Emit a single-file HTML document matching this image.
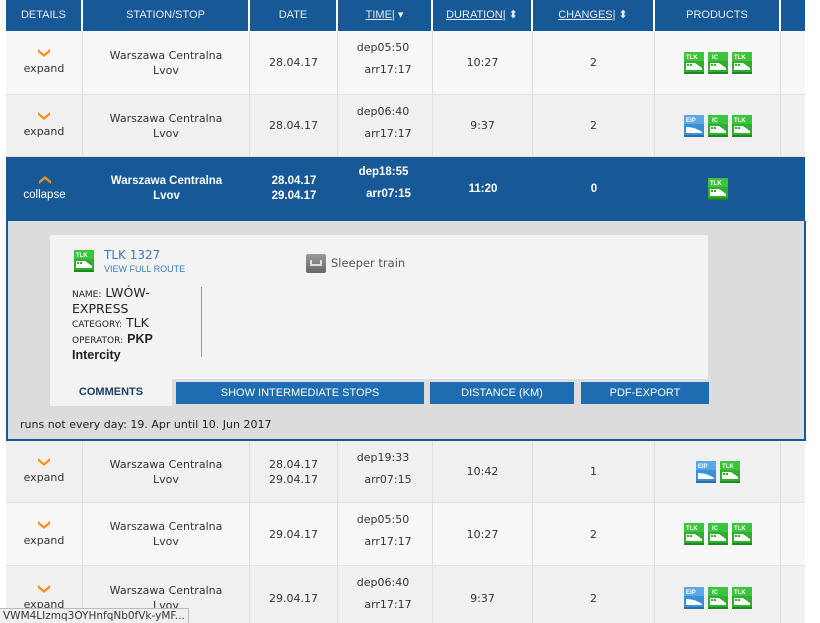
<!DOCTYPE html>
<html><head><meta charset="utf-8"><style>
*{margin:0;padding:0;box-sizing:border-box}
html,body{width:820px;height:623px;overflow:hidden}
body{background:#fff;font-family:"DejaVu Sans",Verdana,sans-serif;font-size:11px;color:#333;position:relative}
.row{position:absolute;left:6px;width:799px;display:flex;overflow:hidden}
.c{border-right:1px solid #ddd;display:flex;flex-direction:column;align-items:center;justify-content:center;text-align:center;line-height:15px}
.w1{width:77px}.w2{width:167px}.w3{width:88px}.w4{width:95px}.w5{width:100px}.w6{width:122px}.w7{width:126px}.w8{width:24px;border-right:none}
.hd{top:0;height:31px;background:#175896;color:#e8eef6;font-family:"Liberation Sans",sans-serif;font-size:11px}
.hd .c{border-right:2px solid #fff}
.hd .c.w8{border-right:none}
.u{text-decoration:underline}
.r{border-bottom:1px solid #e2e2e2}
.a{background:#f7f7f7}.b{background:#f0f0f0}
.chev{display:block;width:12px;height:8px}
.t{display:flex;flex-direction:column;line-height:22px;align-items:center;justify-content:flex-start;padding-top:6px}
.t .d{margin-left:-4px}.t .ar{margin-left:6px}
.ic{display:inline-block;width:20px;height:22px;margin:0 2px;vertical-align:middle}
.sel{top:157px;height:64px;background:#175896;color:#fff;font-family:"Liberation Sans",sans-serif;font-size:11.5px}
.sel .c{border-right:none}
.btn{position:absolute;top:382px;height:22px;background:#1e6db2;color:#fff;font-family:"Liberation Sans",sans-serif;font-size:11px;display:flex;align-items:center;justify-content:center}
</style></head><body>
<svg width="0" height="0" style="position:absolute"><defs>
<symbol id="g" viewBox="0 0 20 22"><rect width="20" height="20" fill="#2fae2f"/><rect y="0" width="20" height="9" fill="#3cc43c"/><text x="2" y="7" font-size="6" fill="#fff" font-family="Liberation Sans" font-weight="bold">TLK</text><path d="M2 11h9l7 5v2H2z" fill="#fff"/><path d="M3 12h2v2H3zM6 12h2v2H6z" fill="#2fae2f"/><rect y="20" width="20" height="2" fill="#1d8a1d"/></symbol>
<symbol id="i" viewBox="0 0 20 22"><rect width="20" height="20" fill="#2fae2f"/><rect y="0" width="20" height="9" fill="#3cc43c"/><text x="4" y="7" font-size="6" fill="#fff" font-family="Liberation Sans" font-weight="bold">IC</text><path d="M2 11h9l7 5v2H2z" fill="#fff"/><path d="M3 12h2v2H3zM6 12h2v2H6z" fill="#2fae2f"/><rect y="20" width="20" height="2" fill="#1d8a1d"/></symbol>
<symbol id="e" viewBox="0 0 20 22"><rect width="20" height="20" fill="#3b8fd6"/><rect width="20" height="9" fill="#5aa9e6"/><text x="2" y="7" font-size="6" fill="#fff" font-family="Liberation Sans" font-weight="bold">EIP</text><path d="M2 12c6 0 12 2 16 5v1H2z" fill="#fff"/><rect y="20" width="20" height="2" fill="#2a6faa"/></symbol>
<symbol id="dn" viewBox="0 0 12 8"><path d="M0 0l6 5 6-5v3l-6 5-6-5z" fill="#f39222"/></symbol>
<symbol id="up" viewBox="0 0 12 8"><path d="M0 8l6-5 6 5v-3l-6-5-6 5z" fill="#f39222"/></symbol>
</defs></svg>

<div class="row hd"><div class="c w1">DETAILS</div><div class="c w2">STATION/STOP</div><div class="c w3">DATE</div><div class="c w4"><span><span class="u">TIME|</span> ▾</span></div><div class="c w5"><span><span class="u">DURATION|</span> ⬍</span></div><div class="c w6"><span><span class="u">CHANGES|</span> ⬍</span></div><div class="c w7">PRODUCTS</div><div class="c w8"></div></div>

<div class="row r a" style="top:31px;height:64px"><div class="c w1"><svg class="chev"><use href="#dn"/></svg><div style="margin-top:4px">expand</div></div><div class="c w2">Warszawa Centralna<br>Lvov</div><div class="c w3">28.04.17</div><div class="c w4 t"><span class="d">dep05:50</span><span class="ar">arr17:17</span></div><div class="c w5">10:27</div><div class="c w6">2</div><div class="c w7"><div><svg class="ic"><use href="#g"/></svg><svg class="ic"><use href="#i"/></svg><svg class="ic"><use href="#g"/></svg></div></div><div class="c w8"></div></div>

<div class="row r b" style="top:95px;height:62px"><div class="c w1"><svg class="chev"><use href="#dn"/></svg><div style="margin-top:4px">expand</div></div><div class="c w2">Warszawa Centralna<br>Lvov</div><div class="c w3">28.04.17</div><div class="c w4 t"><span class="d">dep06:40</span><span class="ar">arr17:17</span></div><div class="c w5">9:37</div><div class="c w6">2</div><div class="c w7"><div><svg class="ic"><use href="#e"/></svg><svg class="ic"><use href="#i"/></svg><svg class="ic"><use href="#g"/></svg></div></div><div class="c w8"></div></div>

<div class="row sel"><div class="c w1"><svg class="chev"><use href="#up"/></svg><div style="margin-top:4px">collapse</div></div><div class="c w2" style="font-weight:bold">Warszawa Centralna<br>Lvov</div><div class="c w3" style="font-weight:bold">28.04.17<br>29.04.17</div><div class="c w4 t" style="font-weight:bold;padding-top:4px"><span class="d">dep18:55</span><span class="ar">arr07:15</span></div><div class="c w5" style="font-weight:bold">11:20</div><div class="c w6" style="font-weight:bold">0</div><div class="c w7"><svg class="ic"><use href="#g"/></svg></div><div class="c w8"></div></div>

<div style="position:absolute;left:6px;top:221px;width:800px;height:220px;background:#dcdcdc;border:2px solid #175896;border-top:none"></div>
<div style="position:absolute;left:50px;top:235px;width:658px;height:144px;background:#f3f3f3"></div>
<div style="position:absolute;left:50px;top:379px;width:122px;height:27px;background:#f3f3f3;color:#1d3f66;font-family:'Liberation Sans',sans-serif;font-weight:bold;font-size:11px;text-align:center;line-height:27px">COMMENTS</div>
<svg class="ic" style="position:absolute;left:72px;top:250px"><use href="#g"/></svg>
<div style="position:absolute;left:104px;top:248px;color:#3e79b5;font-size:12px">TLK 1327</div>
<div style="position:absolute;left:104px;top:264px;color:#3e79b5;font-family:'Liberation Sans',sans-serif;font-size:9px">VIEW FULL ROUTE</div>
<div style="position:absolute;left:306px;top:254px;width:20px;height:19px;background:linear-gradient(#9a9a9a,#666);border-radius:2px"></div>
<div style="position:absolute;left:310px;top:260px;width:12px;height:6px;border:2px solid #ddd;border-top:none"></div>
<div style="position:absolute;left:331px;top:256px;color:#555;font-size:11.5px">Sleeper train</div>
<div style="position:absolute;left:72px;top:286px;width:128px;font-size:12.5px;line-height:14px;color:#222"><span style="font-size:9px">NAME:</span> LWÓW-<br>EXPRESS<br><span style="font-size:9px">CATEGORY:</span> TLK<br><span style="font-size:9px">OPERATOR:</span> <b style="font-family:'Liberation Sans',sans-serif">PKP<br>Intercity</b></div>
<div style="position:absolute;left:201px;top:287px;width:1px;height:70px;background:#999"></div>
<div class="btn" style="left:176px;width:248px">SHOW INTERMEDIATE STOPS</div>
<div class="btn" style="left:430px;width:144px">DISTANCE (KM)</div>
<div class="btn" style="left:581px;width:128px">PDF-EXPORT</div>
<div style="position:absolute;left:20px;top:418px;font-size:11px;color:#222">runs not every day: 19. Apr until 10. Jun 2017</div>

<div class="row r b" style="top:441px;height:62px"><div class="c w1"><svg class="chev"><use href="#dn"/></svg><div style="margin-top:4px">expand</div></div><div class="c w2">Warszawa Centralna<br>Lvov</div><div class="c w3">28.04.17<br>29.04.17</div><div class="c w4 t"><span class="d">dep19:33</span><span class="ar">arr07:15</span></div><div class="c w5">10:42</div><div class="c w6">1</div><div class="c w7"><div><svg class="ic"><use href="#e"/></svg><svg class="ic"><use href="#g"/></svg></div></div><div class="c w8"></div></div>

<div class="row r a" style="top:503px;height:63px"><div class="c w1"><svg class="chev"><use href="#dn"/></svg><div style="margin-top:4px">expand</div></div><div class="c w2">Warszawa Centralna<br>Lvov</div><div class="c w3">29.04.17</div><div class="c w4 t"><span class="d">dep05:50</span><span class="ar">arr17:17</span></div><div class="c w5">10:27</div><div class="c w6">2</div><div class="c w7"><div><svg class="ic"><use href="#g"/></svg><svg class="ic"><use href="#i"/></svg><svg class="ic"><use href="#g"/></svg></div></div><div class="c w8"></div></div>

<div class="row b" style="top:566px;height:64px"><div class="c w1"><svg class="chev"><use href="#dn"/></svg><div style="margin-top:4px">expand</div></div><div class="c w2">Warszawa Centralna<br>Lvov</div><div class="c w3">29.04.17</div><div class="c w4 t"><span class="d">dep06:40</span><span class="ar">arr17:17</span></div><div class="c w5">9:37</div><div class="c w6">2</div><div class="c w7"><div><svg class="ic"><use href="#e"/></svg><svg class="ic"><use href="#i"/></svg><svg class="ic"><use href="#g"/></svg></div></div><div class="c w8"></div></div>

<div style="position:absolute;left:0;top:608px;height:15px;padding:0 3px;background:#f0f0f0;border:1px solid #bbb;border-left:none;border-bottom:none;font-size:10.5px;line-height:14px;color:#333">VWM4LIzmq3OYHnfqNb0fVk-yMF...</div>
</body></html>
